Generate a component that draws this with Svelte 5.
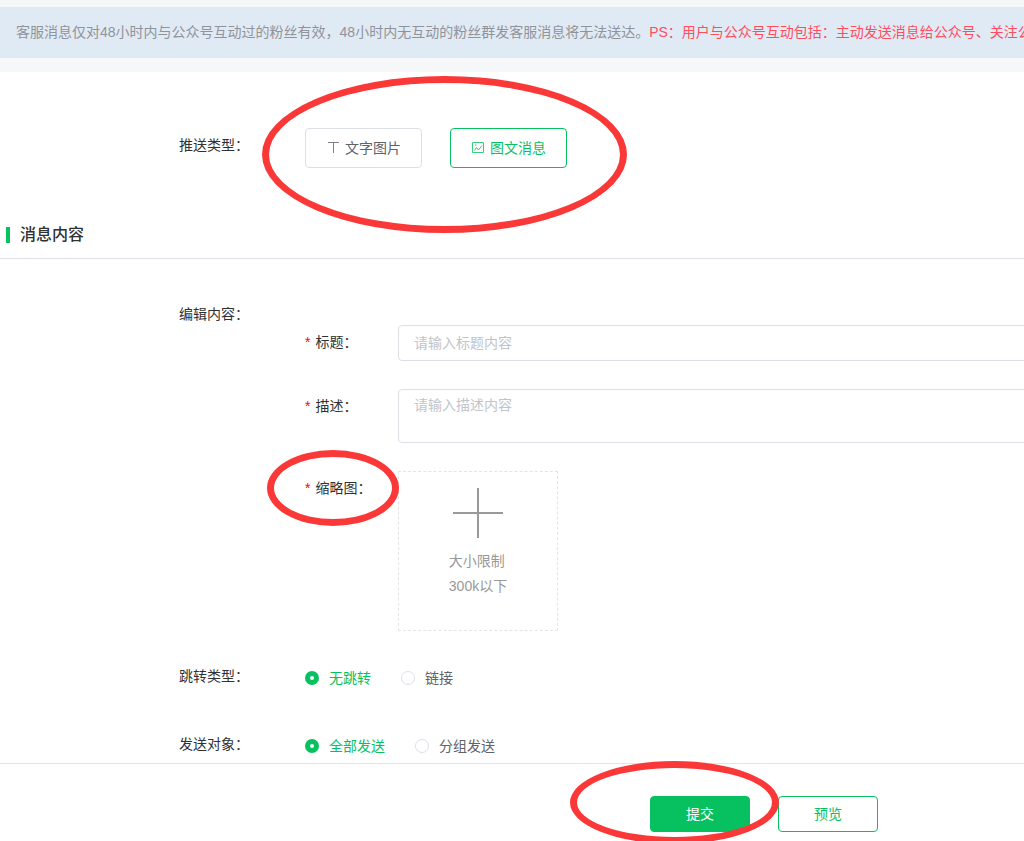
<script>
  let messageType = $state('news');
  let jump = $state('none');
  let target = $state('all');
  let title = $state('');
  let description = $state('');

  const jumpOptions = [
    { value: 'none', label: '无跳转' },
    { value: 'link', label: '链接' }
  ];
  const targetOptions = [
    { value: 'all', label: '全部发送' },
    { value: 'group', label: '分组发送' }
  ];
</script>

<div class="page">
  <div class="notice-wrap">
    <p class="notice">客服消息仅对48小时内与公众号互动过的粉丝有效，48小时内无互动的粉丝群发客服消息将无法送达。<span class="warn">PS：用户与公众号互动包括：主动发送消息给公众号、关注公</span></p>
  </div>

  <form onsubmit={(e) => e.preventDefault()}>
    <div class="row type-row">
      <span class="row-label" id="type-label">推送类型：</span>
      <div class="types" role="group" aria-labelledby="type-label">
        <button type="button" class="type" class:active={messageType === 'text'} onclick={() => (messageType = 'text')}>
          <svg viewBox="0 0 14 14" aria-hidden="true"><path d="M2 2.5h11M7.5 2.5v10.5" /></svg>
          文字图片
        </button>
        <button type="button" class="type" class:active={messageType === 'news'} onclick={() => (messageType = 'news')}>
          <svg viewBox="0 0 14 14" aria-hidden="true">
            <path d="M1.5 2.5h11v10h-11zM3.5 10.5l2-3 2 2.5 3.5-4.5M4 5h1.5" />
          </svg>
          图文消息
        </button>
        <span class="ring ring-types"></span>
      </div>
    </div>

    <h2><span class="mark"></span>消息内容</h2>

    <div class="row edit-row">
      <span class="row-label">编辑内容：</span>
      <div class="fields">
        <label class="field-label" for="title">标题：</label>
        <input class="control" id="title" type="text" placeholder="请输入标题内容" bind:value={title} />
        <label class="field-label" for="description">描述：</label>
        <textarea class="control" id="description" placeholder="请输入描述内容" bind:value={description}></textarea>
        <label class="field-label" for="thumb">缩略图：<span class="ring ring-thumb"></span></label>
        <label class="upload">
          <input id="thumb" class="hidden" type="file" accept="image/*" />
          <span class="plus"></span>
          <span class="hint">大小限制<br />300k以下</span>
        </label>
      </div>
    </div>

    <div class="row">
      <span class="row-label" id="jump-label">跳转类型：</span>
      <div class="radios" role="radiogroup" aria-labelledby="jump-label">
        {#each jumpOptions as o}
          <label class="radio"><input type="radio" name="jump" value={o.value} bind:group={jump} /><span>{o.label}</span></label>
        {/each}
      </div>
    </div>

    <div class="row">
      <span class="row-label" id="target-label">发送对象：</span>
      <div class="radios" role="radiogroup" aria-labelledby="target-label">
        {#each targetOptions as o}
          <label class="radio"><input type="radio" name="target" value={o.value} bind:group={target} /><span>{o.label}</span></label>
        {/each}
      </div>
    </div>

    <footer>
      <div class="actions">
        <button type="submit" class="action primary">提交</button>
        <button type="button" class="action">预览</button>
        <span class="ring ring-submit"></span>
      </div>
    </footer>
  </form>
</div>

<style>
  :global(body) {
    margin: 0;
    background: #fff;
  }
  .page,
  button,
  input,
  textarea {
    font-family: 'Liberation Sans', 'Noto Sans CJK SC', sans-serif;
    font-size: 14px;
  }
  .page {
    overflow: hidden;
    color: #303133;
  }
  .page *,
  .page *::before {
    box-sizing: border-box;
  }
  .notice-wrap {
    padding: 7px 0 14px;
    background: #f6f7f9;
  }
  .notice {
    margin: 0;
    padding: 0 16px;
    overflow: hidden;
    line-height: 51px;
    white-space: nowrap;
    color: #909399;
    background: #e0eaf5;
  }
  .warn {
    color: #ff4d5e;
  }
  .row {
    display: grid;
    grid-template-columns: 126px 1fr;
    margin-bottom: 34px;
    padding-left: 179px;
  }
  .row-label {
    line-height: 34px;
  }
  .type-row {
    margin: 56px 0 55px;
  }
  .types {
    position: relative;
    display: flex;
    gap: 28px;
    justify-self: start;
  }
  .type {
    display: flex;
    align-items: center;
    gap: 5px;
    height: 40px;
    padding: 0 20px 2px;
    border: 1px solid #dcdfe6;
    border-radius: 4px;
    color: #606266;
    background: #fff;
    white-space: nowrap;
  }
  .type svg {
    width: 14px;
    height: 14px;
    fill: none;
    stroke: currentColor;
    stroke-width: 1;
    opacity: 0.8;
  }
  .type.active {
    border-color: #07c160;
    color: #07c160;
  }
  h2 {
    display: flex;
    align-items: center;
    gap: 10px;
    margin: 0;
    padding: 0 6px 11px;
    border-bottom: 1px solid #dcdfe6;
    font-size: 16px;
    font-weight: 500;
    line-height: 24px;
  }
  .mark {
    width: 4px;
    height: 16px;
    background: #07c160;
  }
  .edit-row {
    margin: 41px 0 28px;
  }
  .edit-row .row-label {
    line-height: 28px;
  }
  .fields {
    display: grid;
    grid-template-columns: 93px minmax(720px, 1fr);
    row-gap: 28px;
    padding-top: 25px;
  }
  .field-label {
    position: relative;
    line-height: 34px;
  }
  .field-label::before {
    content: '*';
    margin-right: 5px;
    color: #f00;
  }
  .control {
    width: 100%;
    height: 36px;
    margin: 0;
    padding: 0 15px;
    border: 1px solid #dcdfe6;
    border-radius: 4px;
    color: #606266;
    background: #fff;
    outline: none;
  }
  textarea.control {
    display: block;
    height: 54px;
    padding: 5px 15px;
    line-height: 21px;
    resize: none;
  }
  .control::placeholder {
    color: #c0c4cc;
    opacity: 1;
  }
  .upload {
    display: flex;
    flex-direction: column;
    align-items: center;
    gap: 11px;
    width: 160px;
    height: 160px;
    padding-top: 16px;
    border: 1px dashed #e4e4e4;
    color: #999;
    line-height: 25px;
    cursor: pointer;
  }
  .hidden {
    position: absolute;
    width: 1px;
    height: 1px;
    opacity: 0;
  }
  .plus {
    width: 50px;
    height: 50px;
    background:
      linear-gradient(#999, #999) center / 50px 2px no-repeat,
      linear-gradient(#999, #999) center / 2px 50px no-repeat;
  }
  .radios {
    display: flex;
    gap: 30px;
    padding-top: 4px;
    line-height: 30px;
    color: #606266;
  }
  .radio {
    display: flex;
    align-items: center;
    gap: 10px;
  }
  .radio input {
    appearance: none;
    width: 14px;
    height: 14px;
    margin: 0;
    border: 1px solid #dcdfe6;
    border-radius: 50%;
    background: #fff;
  }
  .radio input:checked {
    border: 5px solid #07c160;
  }
  .radio input:checked + span {
    color: #07c160;
  }
  footer {
    display: flex;
    justify-content: center;
    margin-top: -32px;
    padding: 32px 0 9px 504px;
    border-top: 1px solid #e4e4e4;
  }
  .actions {
    position: relative;
    display: flex;
    gap: 28px;
  }
  .action {
    width: 100px;
    height: 36px;
    padding: 0 0 2px;
    border: 1px solid #07c160;
    border-radius: 4px;
    color: #07c160;
    background: #fff;
  }
  .action.primary {
    color: #fff;
    background: #07c160;
  }
  .ring {
    position: absolute;
    border: 7px solid #fb3838;
    border-radius: 50%;
    pointer-events: none;
  }
  .ring-types {
    top: -52px;
    left: -43px;
    width: 365px;
    height: 157px;
  }
  .ring-thumb {
    top: -21px;
    left: -38px;
    width: 132px;
    height: 76px;
  }
  .ring-submit {
    top: -35px;
    left: -80px;
    width: 209px;
    height: 83px;
  }
</style>
